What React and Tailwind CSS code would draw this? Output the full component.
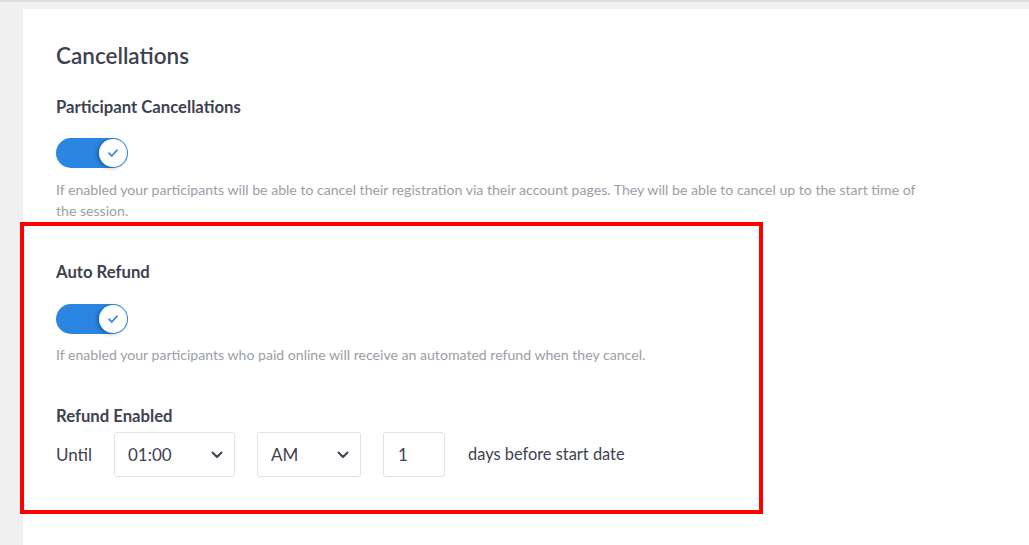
import React from "react";

const Toggle = () => (
  <div className="relative flex h-[30px] w-[72px] items-center rounded-full bg-[#2a86e2]">
    <div className="absolute right-[1px] top-[1px] flex h-[28px] w-[28px] items-center justify-center rounded-full bg-white shadow-[-2px_1px_4px_rgba(0,0,0,0.3)]">
      <svg width="12" height="10" viewBox="0 0 12 10" fill="none">
        <path d="M2 5.2 L4.8 8 L10 2.2" stroke="#3b8ee6" strokeWidth="1.8" strokeLinecap="round" strokeLinejoin="round" />
      </svg>
    </div>
  </div>
);

const Chevron = () => (
  <svg width="12" height="8" viewBox="0 0 12 8" fill="none">
    <path d="M1.5 1.5 L6 6 L10.5 1.5" stroke="#3d4251" strokeWidth="2" strokeLinecap="round" strokeLinejoin="round" />
  </svg>
);

const App = () => {
  return (
    <div
      className="relative h-[545px] w-[1029px] overflow-hidden border-t-2 border-[#dcdcdc] bg-[#f0f0f0] pl-[23px] pt-[7px] text-[#3d4251]"
      style={{ fontFamily: "Lato, 'Open Sans', sans-serif" }}
    >
      <div className="h-[600px] w-[1100px] bg-white px-[33px] pt-[33px]">
        <h1 className="text-[22.5px] font-semibold leading-[28px]">Cancellations</h1>

        <div className="mt-[26px] text-[16.7px] font-bold leading-[22px]">Participant Cancellations</div>
        <div className="mt-[20px]">
          <Toggle />
        </div>
        <p className="mt-[11px] w-[880px] text-[14.1px] leading-[21px] text-[#9a9ea6]">
          If enabled your participants will be able to cancel their registration via their account pages. They will be able to cancel up to the start time of the session.
        </p>

        <div className="mt-[40px] text-[16.7px] font-bold leading-[22px]">Auto Refund</div>
        <div className="mt-[21px]">
          <Toggle />
        </div>
        <p className="mt-[10px] text-[14.1px] leading-[21px] text-[#9a9ea6]">
          If enabled your participants who paid online will receive an automated refund when they cancel.
        </p>

        <div className="mt-[40px] text-[16.7px] font-bold leading-[22px]">Refund Enabled</div>
        <div className="mt-[5px] flex items-center text-[17px]">
          <span className="w-[58px]">Until</span>
          <div className="flex h-[45px] w-[121px] items-center justify-between rounded-[3px] border border-[#e2e2e2] pl-[13px] pr-[11px]">
            <span>01:00</span>
            <Chevron />
          </div>
          <div className="ml-[22px] flex h-[45px] w-[104px] items-center justify-between rounded-[3px] border border-[#e2e2e2] pl-[13px] pr-[11px]">
            <span>AM</span>
            <Chevron />
          </div>
          <div className="ml-[22px] flex h-[45px] w-[62px] items-center rounded-[3px] border border-[#e2e2e2] pl-[14px]">
            1
          </div>
          <span className="ml-[23px] text-[16.4px]">days before start date</span>
        </div>
      </div>

      <div className="absolute left-[20px] top-[220px] h-[292px] w-[743px] border-4 border-[#ff0000]" />
    </div>
  );
};

export default App;
